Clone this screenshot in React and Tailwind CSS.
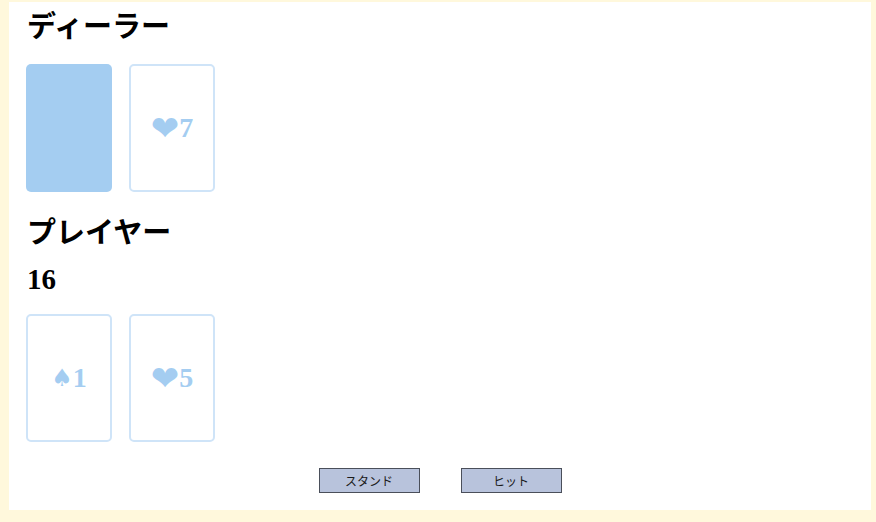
function Card({ back, children }) {
  if (back) return <div className="w-[86px] h-[128px] rounded-[5px] bg-[#a4cdf1]" />;
  return (
    <div className="w-[86px] h-[128px] rounded-[5px] border-2 border-[#cfe4f8] bg-white flex items-center justify-center text-[28px] leading-none font-bold text-[#a4cdf1] font-['Liberation_Serif',serif]">
      {children}
    </div>
  );
}

function Heart() {
  return <span className="text-[34px] leading-none font-['DejaVu_Sans',sans-serif]">❤</span>;
}

function Spade() {
  return <span className="text-[24px] leading-none font-['DejaVu_Sans',sans-serif]">♠</span>;
}

export default function App() {
  return (
    <div className="w-[876px] h-[522px] bg-[#fff8dc] pl-[9px] pr-[5px] pt-[2px] pb-[12px]">
      <div className="w-full h-full bg-white pl-[17px] flex flex-col">
        <h2 className="mt-[4px] pl-[1px] text-[29px] leading-[36px] font-bold text-black font-['Noto_Sans_CJK_JP',sans-serif]">
          ディーラー
        </h2>
        <div className="mt-[22px] flex gap-[17px]">
          <Card back />
          <Card>
            <Heart />7
          </Card>
        </div>
        <h2 className="mt-[20px] pl-[1px] text-[29px] leading-[36px] font-bold text-black font-['Noto_Sans_CJK_JP',sans-serif]">
          プレイヤー
        </h2>
        <div className="mt-[13px] pl-[1px] text-[29px] leading-[36px] font-bold text-black font-['Liberation_Serif',serif]">
          16
        </div>
        <div className="mt-[17px] flex gap-[17px]">
          <Card>
            <Spade />1
          </Card>
          <Card>
            <Heart />5
          </Card>
        </div>
        <div className="mt-[26px] flex justify-center gap-[41px] pr-[17px]">
          <button className="w-[101px] h-[25px] bg-[#b8c3dc] border border-[#4a4f5a] text-[12px] text-[#1a1a1a] font-['Noto_Sans_CJK_JP',sans-serif]">
            スタンド
          </button>
          <button className="w-[101px] h-[25px] bg-[#b8c3dc] border border-[#4a4f5a] text-[12px] text-[#1a1a1a] font-['Noto_Sans_CJK_JP',sans-serif]">
            ヒット
          </button>
        </div>
      </div>
    </div>
  );
}
